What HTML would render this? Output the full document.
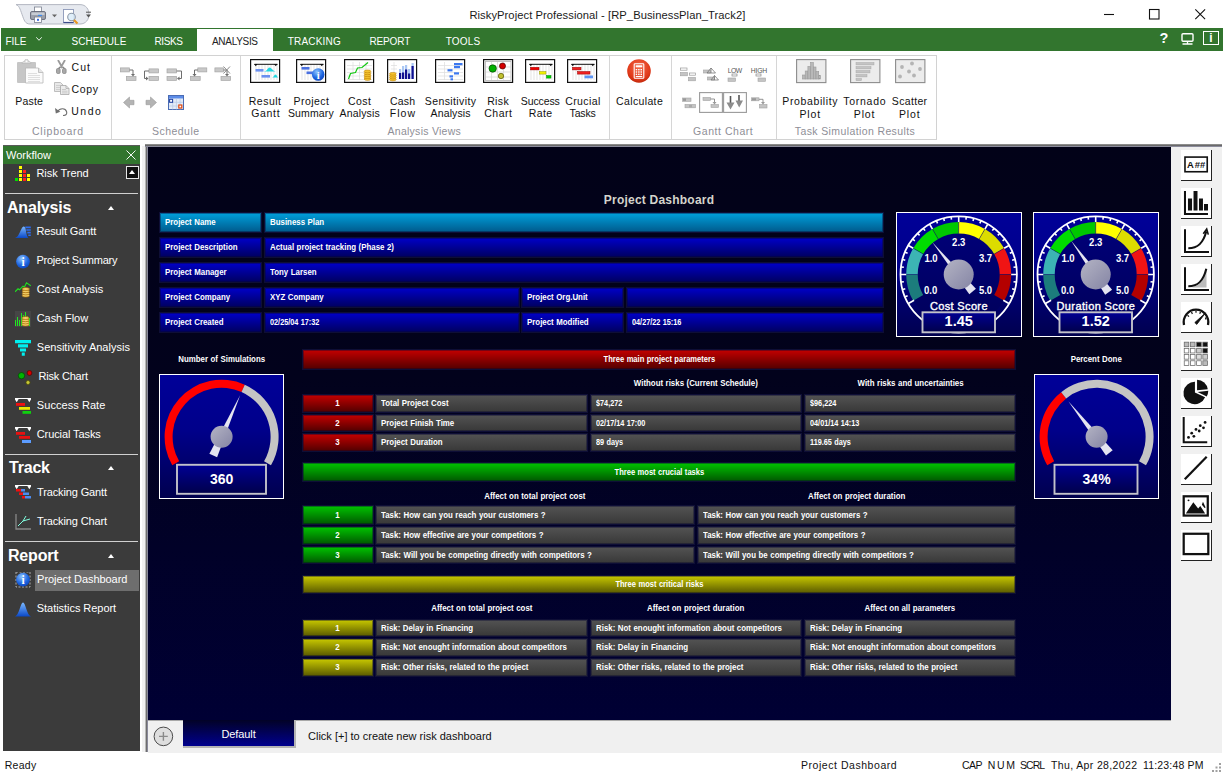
<!DOCTYPE html>
<html><head><meta charset="utf-8"><title>RiskyProject Professional</title>
<style>
*{box-sizing:border-box;margin:0;padding:0}
html,body{width:1224px;height:774px;overflow:hidden;background:#fff;font-family:"Liberation Sans",sans-serif;}
.a{position:absolute}
#app{position:relative;width:1224px;height:774px;overflow:hidden;background:#fff}
/* title */
#title{left:0;top:0;width:1224px;height:28px;background:#fff}
#title .t{left:0;width:1214px;top:7px;text-align:center;font-size:12px;color:#1a1a1a;letter-spacing:-0.1px}
/* tab bar */
#tabs{left:0;top:28px;width:1224px;height:23px;background:#32752e;border-left:1px solid #fff;border-right:1px solid #fff}
#tabs .tb{top:0;height:23px;line-height:25px;font-size:11px;color:#fff;white-space:nowrap}
#tabs .act{background:#fff;color:#222;top:1px;height:22px;line-height:23px;text-align:center}
/* ribbon */
#ribbon{left:4px;top:55px;width:933px;height:85px;border:1px solid #d2d2d2;background:#fff}
.sep{top:0;width:1px;height:83px;background:#d6d6d6}
.gl{font-size:11px;color:#8a8a8a;text-align:center;top:69px;white-space:nowrap;letter-spacing:.2px}
.rl{line-height:12px;white-space:nowrap}
.ico{width:30px;height:24px;border:1px solid #111;background:#fff;overflow:hidden}
.ico.g{border-color:#8c8c8c;background:#eee}
/* sidebar */
#side{left:3px;top:146px;width:137px;height:605px;background:#3b3b3b}
#side .hd{left:0;top:0;width:137px;height:18px;background:#32752e;color:#fff;font-size:11px;line-height:18px;padding-left:3px}
.si{left:37px;font-size:11px;color:#fff;white-space:nowrap;height:14px;line-height:14px}
.sh{left:5px;font-size:16px;font-weight:bold;color:#fff;line-height:18px;letter-spacing:-.2px}
.sl{left:4px;width:132px;height:1px;background:#d0d0d0}
.tri{left:106px;width:0;height:0;border-left:3.7px solid transparent;border-right:3.7px solid transparent;border-bottom:4px solid #fff}
/* dashboard */
#dash{left:148px;top:146px;width:1023px;height:574px;background:linear-gradient(#020218 0%,#02021c 40%,#000034 100%)}
#lframe{left:145px;top:144px;width:3px;height:608px;background:linear-gradient(to right,#b8b8b8 0 1px,#6e6e6e 1px 2px,#8a8a9c 2px 3px)}
#topline{left:145px;top:144px;width:1077px;height:3px;background:linear-gradient(#8c8c8c 0 1px,#6a6a6a 1px 2px,#8c8c9c 2px 3px)}
.dt{font-size:9px;font-weight:bold;color:#fff;white-space:nowrap;line-height:10px}
.dt span,.c span{display:inline-block;transform:scaleX(.875);word-spacing:.4px;transform-origin:0 50%}
.dt span,.c.ctr span{transform-origin:50% 50%}
.c{font-size:9px;font-weight:bold;color:#fff;white-space:nowrap;border:1px solid #0e0e36;padding-left:5px;box-shadow:inset 0 0 0 1px rgba(8,8,48,.4)}
.c.ctr{text-align:center;padding-left:0}
.bl{background:linear-gradient(#0000c8,#000060)}
.cy{background:linear-gradient(#00a0dc,#005a8c)}
.gy{background:linear-gradient(#535353,#383838)}
.rd{background:linear-gradient(#c40000,#520000)}
.gn{background:linear-gradient(#00c400,#005800)}
.yl{background:linear-gradient(#c8c800,#5a5a00)}
.gbox{border:1px solid #fff;background:linear-gradient(#000096,#00008c 50%,#000058)}
/* right bar */
#rbar{left:1171px;top:144px;width:51px;height:609px;background:#f0f0f0}
.rb{box-sizing:border-box;background:#fff;border-right:1px solid #222;border-bottom:1px solid #222}
/* bottom */
#btab{left:148px;top:720px;width:1074px;height:33px;background:#f0f0f0}
#status{left:0;top:753px;width:1224px;height:21px;background:#fff;font-size:11px;color:#111}
</style></head><body>
<div id="app">

<!-- TITLE -->
<div id="title" class="a">
<svg class="a" style="left:14px;top:4px" width="80" height="23" viewBox="0 0 80 23"><path d="M2 .6h64c6 0 9 4.800 9 9.700s-3 9.700-9 9.700H16c-5 0-6-4-8-9.700S5 1.600 2 .6z" fill="#e6e9ef" stroke="#b4b8c2" stroke-width="1"/>
<g transform="translate(16 3)"><rect x="4.500" y="0" width="7" height="5" fill="#fff" stroke="#7a8090" stroke-width=".8"/><rect x=".5" y="4.500" width="15" height="8" rx="1.500" fill="#9ca0ac" stroke="#5c6070" stroke-width=".8"/><rect x="1.500" y="5.500" width="13" height="2.500" fill="#c8ccd4"/><rect x="8" y="7.800" width="4" height="1.200" fill="#3c8cf0"/><rect x="4.500" y="10" width="7" height="5.500" fill="#fff" stroke="#7a8090" stroke-width=".8"/><rect x="7" y="11.800" width="2" height="2" fill="#3c6ce0"/></g>
<path d="M38 10.500h5l-2.500 2.800z" fill="#666"/>
<g transform="translate(49 5)"><rect x=".5" y=".5" width="10" height="13" fill="#fff" stroke="#8c98b8" stroke-width=".9"/><path d="M.5 13.500h10" stroke="#3c4c8c" stroke-width="1.200"/><circle cx="8.500" cy="8" r="3.800" fill="#dcecf8" fill-opacity=".9" stroke="#8c98a8" stroke-width="1.100"/><path d="M11 11l3.500 3.500" stroke="#e89820" stroke-width="2.200"/></g>
<path d="M72 8.200h5" stroke="#555" stroke-width="1"/><path d="M72 10.500h5l-2.500 3z" fill="#555"/></svg>
<svg class="a" style="left:1100px;top:6px" width="110" height="16" viewBox="0 0 110 16"><path d="M4 8.500h10" stroke="#111" stroke-width="1.100"/><rect x="49.500" y="3.500" width="9.500" height="9.500" fill="none" stroke="#111" stroke-width="1.100"/><path d="M95.300 3.300l9.800 9.800M105.100 3.300l-9.800 9.800" stroke="#111" stroke-width="1.100"/></svg>
<div class="a" style="left:469.39px;top:7.52px;font-size:11.2px;line-height:14px;letter-spacing:0.066px;color:#1a1a1a;white-space:nowrap">RiskyProject Professional - [RP_BusinessPlan_Track2]</div>
</div>

<!-- TABS -->
<div id="tabs" class="a">
<div class="a" style="left:196px;top:1px;width:76px;height:22px;background:#fff"></div>
<div class="a" style="left:4.59px;top:7.94px;font-size:10px;line-height:12px;letter-spacing:-0.092px;color:#fff;white-space:nowrap">FILE</div>
<div class="a" style="left:70.56px;top:7.94px;font-size:10px;line-height:12px;letter-spacing:0.054px;color:#fff;white-space:nowrap">SCHEDULE</div>
<div class="a" style="left:153.49px;top:7.94px;font-size:10px;line-height:12px;letter-spacing:-0.363px;color:#fff;white-space:nowrap">RISKS</div>
<div class="a" style="left:211.00px;top:7.94px;font-size:10px;line-height:12px;letter-spacing:-0.307px;color:#222;white-space:nowrap">ANALYSIS</div>
<div class="a" style="left:286.81px;top:7.94px;font-size:10px;line-height:12px;letter-spacing:0.179px;color:#fff;white-space:nowrap">TRACKING</div>
<div class="a" style="left:368.49px;top:7.94px;font-size:10px;line-height:12px;letter-spacing:-0.148px;color:#fff;white-space:nowrap">REPORT</div>
<div class="a" style="left:444.71px;top:7.94px;font-size:10px;line-height:12px;letter-spacing:0.169px;color:#fff;white-space:nowrap">TOOLS</div>
<svg class="a" style="left:34.5px;top:9px" width="6" height="4" viewBox="0 0 6 4"><path d="M.3.3l2.700 3 2.700-3" fill="none" stroke="#e8f0e8" stroke-width="1"/></svg>
<div class="a" style="left:1158.5px;top:3px;font-size:14.5px;font-weight:bold;color:#fff;line-height:15px">?</div>
<svg class="a" style="left:1180px;top:5px" width="13" height="12" viewBox="0 0 13 12"><rect x="1" y=".8" width="11" height="7.400" rx="1" fill="none" stroke="#fff" stroke-width="1.400"/><path d="M6.500 8.200v2.500M1.500 11h10" stroke="#fff" stroke-width="1.300"/></svg>
<div class="a" style="left:1202px;top:3px;width:16px;height:14px;border:1px solid #fff;color:#fff;font-size:12px;font-weight:bold;line-height:12px;text-align:center">i</div>
</div>

<!-- RIBBON -->
<div id="ribbon" class="a">
  <div class="a sep" style="left:106px"></div>
  <div class="a sep" style="left:235px"></div>
  <div class="a sep" style="left:604px"></div>
  <div class="a sep" style="left:666px"></div>
  <div class="a sep" style="left:771px"></div>
<svg class="a" style="left:12px;top:3px" width="27" height="25" viewBox="0 0 27 25"><rect x="0" y="3" width="19" height="21" rx="1" fill="#c6c6c6"/><path d="M5 4.500c0-1.500 1-2 2.500-2 0-1.500 1-2.300 2-2.300s2 .8 2 2.300c1.500 0 2.500.5 2.500 2z" fill="#dcdcdc" stroke="#b4b4b4" stroke-width=".6"/><circle cx="9.500" cy="2.300" r=".9" fill="#fff"/>
<path d="M8.500 9h13l4.500 4.500v10.500h-17.500z" fill="#fbfbfb" stroke="#b8b8b8" stroke-width=".8"/><path d="M21.500 9v4.500h4.500" fill="#e4e4e4" stroke="#b8b8b8" stroke-width=".8"/>
<path d="M11 14.500h9M11 16.500h12M11 18.500h12M11 20.500h12M11 22.500h12" stroke="#d8d8d8" stroke-width=".8"/></svg>
<div class="a rl" style="left:10.15px;top:38.86px;font-size:10.5px;letter-spacing:0.243px;color:#111">Paste</div>
<svg class="a" style="left:51px;top:4px" width="11" height="14" viewBox="0 0 11 14"><path d="M2 0l4.500 8M9 0l-4.500 8" stroke="#9a9a9a" stroke-width="1.800"/><path d="M4 7l-1.500 2M7 7l1.500 2" stroke="#888" stroke-width="1.500"/><rect x=".5" y="8.500" width="3.600" height="5" rx="1.200" fill="#a8a8a8" stroke="#8a8a8a" stroke-width=".8"/><rect x="6.500" y="8.500" width="3.600" height="5" rx="1.200" fill="#a8a8a8" stroke="#8a8a8a" stroke-width=".8"/></svg>
<div class="a rl" style="left:66.47px;top:5.11px;font-size:10.5px;letter-spacing:1.092px;color:#111">Cut</div>
<svg class="a" style="left:49px;top:26px" width="16" height="13" viewBox="0 0 16 13"><path d="M.5.5h6l2.500 2.500v6.500h-8.500z" fill="#e8e8e8" stroke="#b0b0b0" stroke-width=".8"/><path d="M2 3.500h4M2 5.500h5M2 7.500h5" stroke="#c4c4c4" stroke-width=".7"/>
<path d="M6.500 3.500h5.500l3 3v6h-8.500z" fill="#ececec" stroke="#a8a8a8" stroke-width=".8"/><path d="M12 3.500v3h3" fill="none" stroke="#a8a8a8" stroke-width=".7"/><path d="M8 7.500h4M8 9.200h5.500M8 10.900h5.500" stroke="#bbb" stroke-width=".7"/></svg>
<div class="a rl" style="left:66.47px;top:26.96px;font-size:10.5px;letter-spacing:0.660px;color:#111">Copy</div>
<svg class="a" style="left:50px;top:50px" width="13" height="10" viewBox="0 0 13 10"><path d="M2.500 5.500c2.500-4 8-3.500 9 0s-1.500 4-3.500 4" fill="none" stroke="#707070" stroke-width="1.100"/><path d="M0 2l.8 5.500 4.500-1.800z" fill="#707070"/></svg>
<div class="a rl" style="left:66.21px;top:48.61px;font-size:10.5px;letter-spacing:1.549px;color:#111">Undo</div>
<svg class="a" style="left:115px;top:11px" width="17" height="15" viewBox="0 0 17 15"><rect x=".4" y=".9" width="9" height="4" fill="#c8c8c8" stroke="#a6a6a6" stroke-width=".7"/><rect x="6.400" y="9.400" width="9.600" height="4" fill="#c8c8c8" stroke="#a6a6a6" stroke-width=".7"/><path d="M9.500 3h3.500v5" fill="none" stroke="#6e6e6e" stroke-width="1"/><path d="M11 7l2 2.500 2-2.500z" fill="#6e6e6e"/></svg>
<svg class="a" style="left:138px;top:11px" width="17" height="15" viewBox="0 0 17 15"><rect x="6" y="1.900" width="9.600" height="4" fill="#c8c8c8" stroke="#a6a6a6" stroke-width=".7"/><rect x="6" y="9.400" width="9.600" height="4" fill="#c8c8c8" stroke="#a6a6a6" stroke-width=".7"/><path d="M6 4h-4.500v7.500h2" fill="none" stroke="#6e6e6e" stroke-width="1"/><path d="M3 9.500l2.500 2-2.500 2z" fill="#6e6e6e"/></svg>
<svg class="a" style="left:161px;top:11px" width="17" height="15" viewBox="0 0 17 15"><rect x="1" y="1.900" width="9.600" height="4" fill="#c8c8c8" stroke="#a6a6a6" stroke-width=".7"/><rect x="1" y="9.400" width="9.600" height="4" fill="#c8c8c8" stroke="#a6a6a6" stroke-width=".7"/><path d="M10.600 4h4.900v7.500h-2.500" fill="none" stroke="#6e6e6e" stroke-width="1"/><path d="M13.500 9.500l-2.500 2 2.500 2z" fill="#6e6e6e"/></svg>
<svg class="a" style="left:185px;top:11px" width="18" height="15" viewBox="0 0 18 15"><rect x="7.800" y=".9" width="9" height="4" fill="#c8c8c8" stroke="#a6a6a6" stroke-width=".7"/><rect x=".6" y="9.400" width="9.600" height="4" fill="#c8c8c8" stroke="#a6a6a6" stroke-width=".7"/><path d="M7.800 3h-3.300v5" fill="none" stroke="#6e6e6e" stroke-width="1"/><path d="M2.500 7l2 2.500 2-2.500z" fill="#6e6e6e"/></svg>
<svg class="a" style="left:209px;top:10px" width="18" height="16" viewBox="0 0 18 16"><rect x=".9" y="1.900" width="8.500" height="4" fill="#c8c8c8" stroke="#a6a6a6" stroke-width=".7"/><rect x="7" y="10.400" width="9.600" height="4" fill="#c8c8c8" stroke="#a6a6a6" stroke-width=".7"/><path d="M9.500 4h3.500v5" fill="none" stroke="#6e6e6e" stroke-width="1"/><path d="M11 8l2 2.500 2-2.500z" fill="#6e6e6e"/><path d="M9.500.5l6.500 7M16 .5l-6.500 7" stroke="#8a8a8a" stroke-width="1"/></svg>
<svg class="a" style="left:118px;top:40px" width="12" height="13" viewBox="0 0 12 13"><path d="M.5 6.500l6-5.500v3.300h4.500v4.400h-4.500v3.300z" fill="#b4b4b4" stroke="#9c9c9c" stroke-width=".6"/></svg>
<svg class="a" style="left:140px;top:40px" width="12" height="13" viewBox="0 0 12 13"><path d="M11.500 6.500l-6-5.500v3.300h-4.500v4.400h4.500v3.300z" fill="#b4b4b4" stroke="#9c9c9c" stroke-width=".6"/></svg>
<svg class="a" style="left:163px;top:39px" width="16" height="15" viewBox="0 0 16 15"><rect x=".5" y=".5" width="15" height="14" fill="#e4ecf8" stroke="#4a6cb4" stroke-width="1"/><rect x="1" y="1" width="14" height="2.500" fill="#5c8ce8"/><path d="M1 7.300h14M1 11h14M4.700 3.500v11M8.400 3.500v11M12.100 3.500v11" stroke="#b8c8e4" stroke-width=".7"/><rect x="1.600" y="4.300" width="3" height="3" fill="#fff" stroke="#1c3ca0" stroke-width="1"/><rect x="10.800" y="10" width="3" height="3" fill="#fff" stroke="#e04810" stroke-width="1.200"/></svg>
<svg class="a" style="left:245px;top:3px" width="31" height="24" viewBox="0 0 31 24"><rect x=".6" y=".6" width="29" height="22.800" fill="#fff" stroke="#111" stroke-width="1.200"/><path d="M6 5v16M9 5v16M12 5v16M15 5v16M18 5v16M21 5v16M24 5v16M27 5v16" stroke="#d8d8d8" stroke-width=".7"/><path d="M4.500 5.300h23" stroke="#111" stroke-width="1"/><path d="M4 5h3.500l-1.700 2.300zM24 5h3.500l-1.700 2.300z" fill="#111"/><rect x="5.500" y="10" width="8" height="2.600" fill="#6a90f0"/><rect x="11.500" y="16" width="8.500" height="2.600" fill="#6a90f0"/><path d="M13.500 12.500c4 0 4-4 6-4s3 3.500 6.500 4z" fill="#20d8e0"/><path d="M22 18.500c2 0 2-3 3.500-3s1.500 3 3 3z" fill="#20d8e0"/></svg>
<svg class="a" style="left:291px;top:3px" width="31" height="24" viewBox="0 0 31 24"><rect x=".6" y=".6" width="29" height="22.800" fill="#fff" stroke="#111" stroke-width="1.200"/><path d="M6 5v16M9 5v16M12 5v16M15 5v16M18 5v16M21 5v16M24 5v16M27 5v16" stroke="#d8d8d8" stroke-width=".7"/><path d="M4.500 5.300h23" stroke="#111" stroke-width="1"/><path d="M4 5h3.500l-1.700 2.300zM24 5h3.500l-1.700 2.300z" fill="#111"/><rect x="5.500" y="8" width="8" height="2.600" fill="#4a70e0"/><rect x="10.500" y="12.500" width="8" height="2.600" fill="#4a70e0"/><defs><radialGradient id="ri" cx=".4" cy=".3" r=".8"><stop offset="0" stop-color="#8cc4ff"/><stop offset=".6" stop-color="#1c64e0"/><stop offset="1" stop-color="#0a3cb0"/></radialGradient></defs><circle cx="22.200" cy="15.500" r="6.300" fill="url(#ri)"/><text x="22.200" y="19.500" font-family="Liberation Serif, serif" font-weight="bold" font-size="10.500" text-anchor="middle" fill="#fff">i</text></svg>
<svg class="a" style="left:339px;top:3px" width="31" height="24" viewBox="0 0 31 24"><rect x=".6" y=".6" width="29" height="22.800" fill="#fff" stroke="#111" stroke-width="1.200"/><path d="M3 6.500h25M3 10h25M3 13.500h25M3 17h25M3 20.500h25M9 3v18M15.500 3v18M22 3v18" stroke="#dcdcdc" stroke-width=".7"/><path d="M4.500 20l2-5.500 5-1 2-4.500 4.500-.5 6-5" fill="none" stroke="#10c810" stroke-width="1.200"/><g fill="#f4c430" stroke="#b87800" stroke-width=".5"><ellipse cx="23.5" cy="20.0" rx="3.400" ry="1.400"/><ellipse cx="23.5" cy="18.1" rx="3.400" ry="1.400"/><ellipse cx="23.5" cy="16.2" rx="3.400" ry="1.400"/><ellipse cx="23.5" cy="14.3" rx="3.400" ry="1.400"/><ellipse cx="23.5" cy="12.4" rx="3.400" ry="1.400"/></g></svg>
<svg class="a" style="left:382px;top:3px" width="31" height="24" viewBox="0 0 31 24"><rect x=".6" y=".6" width="29" height="22.800" fill="#fff" stroke="#111" stroke-width="1.200"/><path d="M4 6.500h6M4 10h6M4 13.500h6M7 3v15" stroke="#dcdcdc" stroke-width=".7"/><rect x="12" y="10" width="2.200" height="10" fill="#aac8f4"/><rect x="12" y="14" width="2.200" height="6" fill="#101090"/><rect x="15" y="7" width="2.200" height="13" fill="#aac8f4"/><rect x="15" y="13.5" width="2.200" height="6.5" fill="#101090"/><rect x="18" y="6" width="2.200" height="14" fill="#aac8f4"/><rect x="18" y="10.5" width="2.200" height="9.5" fill="#101090"/><rect x="21" y="10" width="2.200" height="10" fill="#aac8f4"/><rect x="21" y="14.5" width="2.200" height="5.5" fill="#101090"/><rect x="24.5" y="4" width="2.200" height="16" fill="#aac8f4"/><rect x="24.5" y="7" width="2.200" height="13" fill="#101090"/><g fill="#f4c430" stroke="#b87800" stroke-width=".5"><ellipse cx="5.8" cy="20.5" rx="3.400" ry="1.400"/><ellipse cx="5.8" cy="18.6" rx="3.400" ry="1.400"/><ellipse cx="5.8" cy="16.7" rx="3.400" ry="1.400"/><ellipse cx="5.8" cy="14.8" rx="3.400" ry="1.400"/></g></svg>
<svg class="a" style="left:430px;top:3px" width="31" height="24" viewBox="0 0 31 24"><rect x=".6" y=".6" width="29" height="22.800" fill="#fff" stroke="#111" stroke-width="1.200"/><path d="M3 6.500h25M3 10h25M3 13.500h25M3 17h25M3 20.500h25M9.500 3v18" stroke="#dcdcdc" stroke-width=".7"/><rect x="19" y="4" width="8.500" height="2.200" fill="#3c78f0"/><rect x="19" y="7" width="6" height="2.200" fill="#3c78f0"/><rect x="12.500" y="10.200" width="5" height="2.200" fill="#3c78f0"/><rect x="19" y="13.300" width="5" height="2.200" fill="#3c78f0"/><rect x="14.500" y="16.300" width="3.500" height="2.200" fill="#3c78f0"/><rect x="15.500" y="19.300" width="2.500" height="2" fill="#3c78f0"/></svg>
<svg class="a" style="left:478px;top:3px" width="31" height="24" viewBox="0 0 31 24"><rect x=".6" y=".6" width="29" height="22.800" fill="#fff" stroke="#111" stroke-width="1.200"/><rect x="2.500" y="2.500" width="25.500" height="19" fill="none" stroke="#b4b4b4" stroke-width=".8"/><path d="M3 8h25M3 13h25M3 18h25M8.500 3v18M14.500 3v18M20.500 3v18" stroke="#d4d4d4" stroke-width=".7"/><circle cx="9.700" cy="9.500" r="3.700" fill="#00b000" stroke="#004800" stroke-width=".7"/><circle cx="19.500" cy="7" r="3" fill="#d40000" stroke="#500000" stroke-width=".7"/><circle cx="18" cy="17" r="2.700" fill="#c0c030" stroke="#585800" stroke-width=".7"/></svg>
<svg class="a" style="left:520px;top:3px" width="31" height="24" viewBox="0 0 31 24"><rect x=".6" y=".6" width="29" height="22.800" fill="#fff" stroke="#111" stroke-width="1.200"/><path d="M6 5v16M9 5v16M12 5v16M15 5v16M18 5v16M21 5v16M24 5v16M27 5v16" stroke="#d8d8d8" stroke-width=".7"/><path d="M4.500 5.300h23" stroke="#111" stroke-width="1"/><path d="M4 5h3.500l-1.700 2.300zM24 5h3.500l-1.700 2.300z" fill="#111"/><rect x="5.500" y="8.300" width="8.500" height="2.600" fill="#f00000" stroke="#900" stroke-width=".5"/><rect x="14.500" y="12.500" width="6.500" height="2.600" fill="#f0f000" stroke="#990" stroke-width=".5"/><rect x="21.500" y="16.500" width="4.500" height="2.600" fill="#00d000" stroke="#080" stroke-width=".5"/></svg>
<svg class="a" style="left:562px;top:3px" width="31" height="24" viewBox="0 0 31 24"><rect x=".6" y=".6" width="29" height="22.800" fill="#fff" stroke="#111" stroke-width="1.200"/><path d="M6 5v16M9 5v16M12 5v16M15 5v16M18 5v16M21 5v16M24 5v16M27 5v16" stroke="#d8d8d8" stroke-width=".7"/><path d="M4.500 5.300h23" stroke="#111" stroke-width="1"/><path d="M4 5h3.500l-1.700 2.300zM24 5h3.500l-1.700 2.300z" fill="#111"/><rect x="5.500" y="8.300" width="8.500" height="2.600" fill="#f02020" stroke="#900" stroke-width=".5"/><rect x="10.500" y="12.500" width="12.500" height="2.600" fill="#f02020" stroke="#900" stroke-width=".5"/><rect x="17.500" y="16.500" width="8.500" height="2.800" fill="#5c94f4"/></svg>
<div class="a rl" style="left:243.75px;top:38.96px;font-size:10.5px;letter-spacing:0.485px;color:#111">Result</div>
<div class="a rl" style="left:246.22px;top:51.36px;font-size:10.5px;letter-spacing:0.679px;color:#111">Gantt</div>
<div class="a rl" style="left:288.55px;top:38.96px;font-size:10.5px;letter-spacing:0.462px;color:#111">Project</div>
<div class="a rl" style="left:282.94px;top:51.36px;font-size:10.5px;letter-spacing:0.143px;color:#111">Summary</div>
<div class="a rl" style="left:342.88px;top:38.96px;font-size:10.5px;letter-spacing:0.478px;color:#111">Cost</div>
<div class="a rl" style="left:334.60px;top:51.36px;font-size:10.5px;letter-spacing:0.145px;color:#111">Analysis</div>
<div class="a rl" style="left:385.08px;top:38.96px;font-size:10.5px;letter-spacing:0.146px;color:#111">Cash</div>
<div class="a rl" style="left:384.75px;top:51.36px;font-size:10.5px;letter-spacing:1.024px;color:#111">Flow</div>
<div class="a rl" style="left:419.79px;top:38.96px;font-size:10.5px;letter-spacing:0.396px;color:#111">Sensitivity</div>
<div class="a rl" style="left:425.60px;top:51.36px;font-size:10.5px;letter-spacing:0.124px;color:#111">Analysis</div>
<div class="a rl" style="left:482.15px;top:38.96px;font-size:10.5px;letter-spacing:0.398px;color:#111">Risk</div>
<div class="a rl" style="left:479.23px;top:51.36px;font-size:10.5px;letter-spacing:0.504px;color:#111">Chart</div>
<div class="a rl" style="left:515.79px;top:38.96px;font-size:10.5px;letter-spacing:-0.111px;color:#111">Success</div>
<div class="a rl" style="left:523.65px;top:51.36px;font-size:10.5px;letter-spacing:0.410px;color:#111">Rate</div>
<div class="a rl" style="left:560.23px;top:38.96px;font-size:10.5px;letter-spacing:0.386px;color:#111">Crucial</div>
<div class="a rl" style="left:564.55px;top:51.36px;font-size:10.5px;letter-spacing:-0.166px;color:#111">Tasks</div>
<div class="a rl" style="left:611.08px;top:38.96px;font-size:10.5px;letter-spacing:0.358px;color:#111">Calculate</div>
<div class="a rl" style="left:777.35px;top:38.96px;font-size:10.5px;letter-spacing:0.613px;color:#111">Probability</div>
<div class="a rl" style="left:794.55px;top:51.66px;font-size:10.5px;letter-spacing:0.802px;color:#111">Plot</div>
<div class="a rl" style="left:838.20px;top:38.96px;font-size:10.5px;letter-spacing:0.743px;color:#111">Tornado</div>
<div class="a rl" style="left:848.85px;top:51.66px;font-size:10.5px;letter-spacing:0.802px;color:#111">Plot</div>
<div class="a rl" style="left:886.84px;top:38.96px;font-size:10.5px;letter-spacing:0.336px;color:#111">Scatter</div>
<div class="a rl" style="left:894.05px;top:51.66px;font-size:10.5px;letter-spacing:0.802px;color:#111">Plot</div>
<svg class="a" style="left:622px;top:3px" width="24" height="24" viewBox="0 0 24 24"><defs><radialGradient id="rc" cx=".5" cy=".35" r=".7"><stop offset="0" stop-color="#f46a4a"/><stop offset=".7" stop-color="#e03818"/><stop offset="1" stop-color="#b82408"/></radialGradient></defs><circle cx="12" cy="12" r="11.800" fill="url(#rc)"/><rect x="7.200" y="4.800" width="9.600" height="14.400" rx=".8" fill="none" stroke="#fff" stroke-width="1.100"/><rect x="8.700" y="6.300" width="6.600" height="2" fill="#fff"/><g fill="#fff"><rect x="8.7" y="10.0" width="1.500" height="1.400"/><rect x="11.1" y="10.0" width="1.500" height="1.400"/><rect x="13.5" y="10.0" width="1.500" height="1.400"/><rect x="8.7" y="12.3" width="1.500" height="1.400"/><rect x="11.1" y="12.3" width="1.500" height="1.400"/><rect x="13.5" y="12.3" width="1.500" height="1.400"/><rect x="8.7" y="14.6" width="1.500" height="1.400"/><rect x="11.1" y="14.6" width="1.500" height="1.400"/><rect x="13.5" y="14.6" width="1.500" height="1.400"/><rect x="8.700" y="16.900" width="6.600" height="1.200"/></g></svg>
<svg class="a" style="left:675px;top:11px" width="17" height="15" viewBox="0 0 17 15"><rect x=".5" y="1" width="6.500" height="2.200" fill="#fff" stroke="#999" stroke-width=".7"/><rect x=".5" y="5.500" width="7" height="3.300" fill="#c4c4c4" stroke="#a2a2a2" stroke-width=".6"/><rect x="9.500" y="6" width="6" height="2.200" fill="#fff" stroke="#999" stroke-width=".7"/><rect x="8.500" y="10.500" width="7" height="3.300" fill="#c4c4c4" stroke="#a2a2a2" stroke-width=".6"/></svg>
<svg class="a" style="left:698px;top:11px" width="17" height="15" viewBox="0 0 17 15"><rect x=".5" y="3" width="7" height="3" fill="#c4c4c4" stroke="#a2a2a2" stroke-width=".6"/><path d="M4 6l4-5 4.500 5zM8 1v5" fill="none" stroke="#777" stroke-width=".8"/><rect x="4.500" y="10" width="7" height="3" fill="#c4c4c4" stroke="#a2a2a2" stroke-width=".6"/><path d="M8 13l3.500-4.500 4 4.500zM11.500 8.500v4.500" fill="none" stroke="#777" stroke-width=".8"/></svg>
<svg class="a" style="left:722px;top:11px" width="17" height="15" viewBox="0 0 17 15"><text x="8" y="5.500" font-family="Liberation Sans, sans-serif" font-size="6.800" text-anchor="middle" fill="#555" textLength="14.500">LOW</text><rect x="5" y="7" width="5" height="2" fill="#fff" stroke="#888" stroke-width=".7"/><rect x="1" y="11" width="7.500" height="3.300" fill="#c4c4c4" stroke="#a2a2a2" stroke-width=".6"/></svg>
<svg class="a" style="left:745px;top:11px" width="18" height="15" viewBox="0 0 18 15"><text x="9" y="5.500" font-family="Liberation Sans, sans-serif" font-size="6.800" text-anchor="middle" fill="#555" textLength="16.500">HIGH</text><rect x="6" y="7" width="5" height="2" fill="#fff" stroke="#888" stroke-width=".7"/><rect x="8" y="11" width="7.500" height="3.300" fill="#c4c4c4" stroke="#a2a2a2" stroke-width=".6"/></svg>
<svg class="a" style="left:677px;top:41px" width="15" height="12" viewBox="0 0 15 12"><rect x=".5" y="1" width="8.500" height="3.300" fill="#c4c4c4" stroke="#a2a2a2" stroke-width=".6"/><rect x="1" y="1.400" width="3" height="2.500" fill="#999"/><rect x="3" y="7.500" width="10.500" height="3.300" fill="#c4c4c4" stroke="#a2a2a2" stroke-width=".6"/><rect x="7" y="7.900" width="3" height="2.500" fill="#aaa"/></svg>
<svg class="a" style="left:694px;top:36px" width="24" height="21" viewBox="0 0 24 21"><rect x=".6" y=".6" width="22.800" height="19.800" fill="#fff" stroke="#9a9a9a" stroke-width="1.100"/><rect x="4" y="5.500" width="7.500" height="3" fill="#c4c4c4" stroke="#a2a2a2" stroke-width=".6"/><rect x="12" y="12.500" width="7.500" height="3" fill="#c4c4c4" stroke="#a2a2a2" stroke-width=".6"/><path d="M11.500 7h4v4" fill="none" stroke="#888" stroke-width=".9"/><path d="M13.500 10l2 2.500 2-2.500z" fill="#999"/></svg>
<svg class="a" style="left:718px;top:36px" width="24" height="21" viewBox="0 0 24 21"><rect x=".6" y=".6" width="22.800" height="19.800" fill="#fff" stroke="#9a9a9a" stroke-width="1.100"/><path d="M7.500 4v8M16 3v7" stroke="#555" stroke-width="1.600"/><path d="M3.500 10.500h8l-4 7zM12.500 8.500h7.500l-3.800 7z" fill="#8c8c8c"/></svg>
<svg class="a" style="left:746px;top:41px" width="17" height="12" viewBox="0 0 17 12"><rect x=".5" y=".8" width="7.500" height="3" fill="#c4c4c4" stroke="#a2a2a2" stroke-width=".6"/><rect x="1" y="1.200" width="4" height="2.200" fill="#999"/><rect x="8.500" y="7.500" width="7.500" height="3.500" fill="#c4c4c4" stroke="#a2a2a2" stroke-width=".6"/><path d="M8 2.300h4v4" fill="none" stroke="#888" stroke-width=".9"/><path d="M10 5l2 2.500 2-2.500z" fill="#999"/></svg>
<svg class="a" style="left:791px;top:3px" width="31" height="25" viewBox="0 0 31 25"><rect x=".6" y=".6" width="29.300" height="23" fill="#ececec" stroke="#8c8c8c" stroke-width="1.100"/><g fill="#b8b8b8" stroke="#9a9a9a" stroke-width=".6"><rect x="6.500" y="16" width="2.700" height="4"/><rect x="9.200" y="12" width="2.700" height="8"/><rect x="11.900" y="7.500" width="2.700" height="12.500"/><rect x="14.600" y="3.500" width="2.700" height="16.500"/><rect x="17.300" y="8" width="2.700" height="12"/><rect x="20" y="12.500" width="2.700" height="7.500"/><rect x="22.700" y="16.500" width="1.800" height="3.500"/></g></svg>
<svg class="a" style="left:845px;top:3px" width="31" height="25" viewBox="0 0 31 25"><rect x=".6" y=".6" width="29.300" height="23" fill="#ececec" stroke="#8c8c8c" stroke-width="1.100"/><g fill="#c4c4c4" stroke="#aaa" stroke-width=".5"><rect x="6" y="3.500" width="18" height="2.400"/><rect x="6" y="7.500" width="15" height="2.400"/><rect x="6" y="11.500" width="14" height="2.400"/><rect x="6" y="15.500" width="11" height="2.400"/><rect x="6" y="19.500" width="5.500" height="2.200"/></g></svg>
<svg class="a" style="left:890px;top:3px" width="31" height="25" viewBox="0 0 31 25"><rect x=".6" y=".6" width="29.300" height="23" fill="#ececec" stroke="#8c8c8c" stroke-width="1.100"/><g fill="#b4b4b4"><circle cx="7" cy="8" r="1.900"/><circle cx="17" cy="4.500" r="1.900"/><circle cx="14" cy="12.500" r="1.900"/><circle cx="25" cy="10" r="1.900"/><circle cx="5" cy="17.500" r="1.900"/><circle cx="19" cy="16.500" r="1.900"/></g></svg>
<div class="a rl" style="left:26.98px;top:68.96px;font-size:10.5px;letter-spacing:0.779px;color:#8e8e96">Clipboard</div>
<div class="a rl" style="left:146.94px;top:68.96px;font-size:10.5px;letter-spacing:0.478px;color:#8e8e96">Schedule</div>
<div class="a rl" style="left:382.50px;top:68.96px;font-size:10.5px;letter-spacing:0.269px;color:#8e8e96">Analysis Views</div>
<div class="a rl" style="left:688.08px;top:68.96px;font-size:10.5px;letter-spacing:0.540px;color:#8e8e96">Gantt Chart</div>
<div class="a rl" style="left:789.80px;top:68.96px;font-size:10.5px;letter-spacing:0.386px;color:#8e8e96">Task Simulation Results</div>

</div>

<!-- SIDEBAR -->
<div id="side" class="a">
  <div class="a hd">Workflow</div>
<svg class="a" style="left:123px;top:4px" width="10" height="10" viewBox="0 0 10 10"><path d="M.5.5l9 9M9.500.5l-9 9" stroke="#fff" stroke-width=".950"/></svg>
<div class="a" style="left:123px;top:20px;width:13px;height:13px;background:#111;border:1px solid #e8e8e8"></div><div class="a" style="left:126px;top:24px;width:0;height:0;border-left:3.5px solid transparent;border-right:3.5px solid transparent;border-bottom:4px solid #fff"></div>
<svg class="a" style="left:12px;top:20.0px" width="16" height="16" viewBox="0 0 16 16"><rect x="0" y="12" width="3" height="3" fill="#00e000"/><rect x="4" y="12" width="3" height="3" fill="#ffff00"/><rect x="8" y="12" width="3" height="3" fill="#ff2020"/><rect x="12" y="12" width="3" height="3" fill="#ffff00"/><rect x="4" y="8" width="3" height="3" fill="#ffff00"/><rect x="8" y="8" width="3" height="3" fill="#ff2020"/><rect x="12" y="8" width="3" height="3" fill="#ffff00"/><rect x="4" y="4" width="3" height="3" fill="#ffff00"/><rect x="8" y="4" width="3" height="3" fill="#ff2020"/><rect x="4" y="0" width="3" height="3" fill="#ffff00"/></svg>
<div class="a si" style="left:33.41px;top:20px;letter-spacing:-0.035px">Risk Trend</div>
<div class="a sl" style="left:2px;top:47px;width:133px"></div>
<div class="a sh" style="left:4px;top:53px">Analysis</div>
<div class="a tri" style="left:105px;top:60px"></div>
<svg class="a" style="left:12px;top:78.0px" width="16" height="16" viewBox="0 0 16 16"><defs><linearGradient id="sb" x1="0" y1="0" x2="0" y2="1"><stop offset="0" stop-color="#7ab8ff"/><stop offset="1" stop-color="#0a48c8"/></linearGradient></defs><path d="M0 14c4.500-.8 6-11.600 8.600-11.600s2.200 6 3.400 9 1.500 2.600 2 2.600z" fill="url(#sb)"/><path d="M10.300 2.600h5.500v1.600h-5.500zM11.300 5.200h4.500v1.600h-4.500zM12.300 7.800h3.500v1.600h-3.500zM13.300 10.400h2.500v1.600h-2.500z" fill="#2c6cf0"/></svg>
<div class="a si" style="left:33.41px;top:78px;letter-spacing:-0.120px">Result Gantt</div>
<svg class="a" style="left:12px;top:107.5px" width="16" height="16" viewBox="0 0 16 16"><defs><radialGradient id="si" cx=".4" cy=".3" r=".8"><stop offset="0" stop-color="#8cc4ff"/><stop offset=".6" stop-color="#1c64e0"/><stop offset="1" stop-color="#0a3cb0"/></radialGradient></defs><circle cx="8" cy="7.600" r="6.900" fill="url(#si)"/><text x="8" y="11.800" font-family="Liberation Serif, serif" font-weight="bold" font-size="11.500" text-anchor="middle" fill="#fff">i</text></svg>
<div class="a si" style="left:33.41px;top:107px;letter-spacing:-0.233px">Project Summary</div>
<svg class="a" style="left:12px;top:136.0px" width="16" height="16" viewBox="0 0 16 16"><path d="M0 9.800L3 6.800L4.500 7.800L8 4.200L9.500 5L11.500.8L15.800 3.800" fill="none" stroke="#20e020" stroke-width="1.100"/><g stroke="#a86800" stroke-width=".7" fill="#f0cc68"><ellipse cx="10.8" cy="13.6" rx="3.600" ry="1.500"/><ellipse cx="10.8" cy="11.4" rx="3.600" ry="1.500"/><ellipse cx="10.8" cy="9.2" rx="3.600" ry="1.500"/><ellipse cx="10.8" cy="7" rx="3.600" ry="1.500"/></g></svg>
<div class="a si" style="left:33.75px;top:136px;letter-spacing:0.033px">Cost Analysis</div>
<svg class="a" style="left:12px;top:165.0px" width="16" height="16" viewBox="0 0 16 16"><rect x="0" y="0" width="16" height="16" fill="#464646"/><path d="M.5 15V9M2.500 15V6M4.500 15V8.500M6.500 15V1.500M8.500 15V4M10.500 15V1M12.500 15V4.500M14.500 15V7" stroke="#20e820" stroke-width="1" shape-rendering="crispEdges"/><g stroke="#a86800" stroke-width=".7" fill="#f0cc68"><ellipse cx="10.5" cy="13.6" rx="3.600" ry="1.500"/><ellipse cx="10.5" cy="11.4" rx="3.600" ry="1.500"/><ellipse cx="10.5" cy="9.2" rx="3.600" ry="1.500"/><ellipse cx="10.5" cy="7" rx="3.600" ry="1.500"/></g></svg>
<div class="a si" style="left:33.75px;top:165px;letter-spacing:-0.078px">Cash Flow</div>
<svg class="a" style="left:12px;top:194.0px" width="16" height="16" viewBox="0 0 16 16"><path d="M0 0h16v3.200h-16zM3 4.200h10v3.200h-10zM5 8.400h6v3.200h-6zM6.800 12.600h3v3.200h-3z" fill="#00f0f0"/></svg>
<div class="a si" style="left:33.82px;top:194px;letter-spacing:0.009px">Sensitivity Analysis</div>
<svg class="a" style="left:14px;top:222.5px" width="16" height="16" viewBox="0 0 16 16"><circle cx="4.500" cy="6.700" r="3.200" fill="#00b400" stroke="#004000" stroke-width=".7"/><circle cx="12.500" cy="4" r="2.400" fill="#d80000" stroke="#500" stroke-width=".7"/><circle cx="11" cy="13.500" r="2" fill="#c8c838" stroke="#505000" stroke-width=".7"/></svg>
<div class="a si" style="left:35.41px;top:223px;letter-spacing:-0.188px">Risk Chart</div>
<svg class="a" style="left:12px;top:251.5px" width="16" height="16" viewBox="0 0 16 16"><path d="M0 .3h16M0 .3l1.700 2.800L3.400 .3zM12.600 .3l1.700 2.800L16 .3z" fill="#fff" stroke="#fff" stroke-width="1.200"/><rect x="1" y="5" width="9" height="2.800" fill="#f01010"/><rect x="4" y="9" width="11" height="2.800" fill="#e8e800"/><rect x="7.500" y="13" width="8.500" height="2.800" fill="#10d010"/></svg>
<div class="a si" style="left:33.82px;top:252px;letter-spacing:0.055px">Success Rate</div>
<svg class="a" style="left:12px;top:280.5px" width="16" height="16" viewBox="0 0 16 16"><path d="M0 .3h16M0 .3l1.700 2.800L3.400 .3zM12.600 .3l1.700 2.800L16 .3z" fill="#fff" stroke="#fff" stroke-width="1.200"/><rect x="1" y="5" width="9" height="2.800" fill="#e81010"/><rect x="4" y="9" width="11" height="2.800" fill="#e81010"/><rect x="7" y="13" width="9" height="3" fill="#5c9cff"/></svg>
<div class="a si" style="left:33.75px;top:281px;letter-spacing:-0.098px">Crucial Tasks</div>
<div class="a sl" style="left:2px;top:308px;width:133px"></div>
<div class="a sh" style="left:6px;top:313px">Track</div>
<div class="a tri" style="left:105px;top:320px"></div>
<svg class="a" style="left:12px;top:339.0px" width="16" height="16" viewBox="0 0 16 16"><path d="M0 .3h16M0 .3l1.700 2.800L3.400 .3zM12.600 .3l1.700 2.800L16 .3z" fill="#fff" stroke="#fff" stroke-width="1.200"/><rect x="1" y="4" width="5" height="2.500" fill="#f01010"/><rect x="6" y="4" width="4" height="2.500" fill="#4c8cf0"/><rect x="4" y="7.500" width="4" height="2.500" fill="#f01010"/><rect x="8" y="7.500" width="6" height="2.500" fill="#4c8cf0"/><rect x="7" y="11" width="3" height="2.500" fill="#f01010"/><rect x="10" y="11" width="6" height="2.500" fill="#4c8cf0"/></svg>
<div class="a si" style="left:34.09px;top:339px;letter-spacing:-0.138px">Tracking Gantt</div>
<svg class="a" style="left:12px;top:368.0px" width="16" height="16" viewBox="0 0 16 16"><path d="M1 0v15h15" fill="none" stroke="#888" stroke-width="1.300"/><path d="M3 12l5-5 3-5M8 7l7-2" fill="none" stroke="#80ffe0" stroke-width="1"/></svg>
<div class="a si" style="left:34.09px;top:368px;letter-spacing:-0.138px">Tracking Chart</div>
<div class="a sl" style="left:2px;top:395px;width:133px"></div>
<div class="a sh" style="left:5px;top:401px">Report</div>
<div class="a tri" style="left:105px;top:408px"></div>
<svg class="a" style="left:12px;top:425.5px" width="16" height="16" viewBox="0 0 16 16"><rect x="1" y="0" width="14" height="15" fill="none" stroke="#aaa" stroke-width="1" stroke-dasharray="2 1.500"/><defs><radialGradient id="si2" cx=".4" cy=".3" r=".8"><stop offset="0" stop-color="#8cc4ff"/><stop offset=".6" stop-color="#1c64e0"/><stop offset="1" stop-color="#0a3cb0"/></radialGradient></defs><circle cx="8" cy="7.600" r="6.900" fill="url(#si2)"/><text x="8" y="11.800" font-family="Liberation Serif, serif" font-weight="bold" font-size="11.500" text-anchor="middle" fill="#fff">i</text></svg>
<div class="a" style="left:32px;top:424px;width:104px;height:21px;background:#6e6e6e"></div>
<div class="a si" style="left:34.11px;top:426px;letter-spacing:-0.051px">Project Dashboard</div>
<svg class="a" style="left:12px;top:454.5px" width="16" height="16" viewBox="0 0 16 16"><path d="M0 15.500c4-1 5.500-14 8-14s4 13 8 14z" fill="url(#sb)"/></svg>
<div class="a si" style="left:33.82px;top:455px;letter-spacing:-0.046px">Statistics Report</div>

</div>

<!-- DASHBOARD -->
<div id="dash" class="a"></div>
<div id="dc" class="a" style="left:0;top:0;width:0;height:0">
<div class="a" style="left:559px;top:193px;width:200px;text-align:center;font-size:12px;font-weight:bold;color:#d4d4cc;line-height:14px;letter-spacing:.22px">Project Dashboard</div>
<div class="a c cy" style="left:159px;top:212px;width:103px;height:21px;line-height:19px"><span>Project Name</span></div>
<div class="a c cy" style="left:264px;top:212px;width:620px;height:21px;line-height:19px"><span>Business Plan</span></div>
<div class="a c bl" style="left:159px;top:237px;width:103px;height:21px;line-height:19px"><span>Project Description</span></div>
<div class="a c bl" style="left:264px;top:237px;width:620px;height:21px;line-height:19px"><span>Actual project tracking (Phase 2)</span></div>
<div class="a c bl" style="left:159px;top:262px;width:103px;height:21px;line-height:19px"><span>Project Manager</span></div>
<div class="a c bl" style="left:264px;top:262px;width:620px;height:21px;line-height:19px"><span>Tony Larsen</span></div>
<div class="a c bl" style="left:159px;top:287px;width:103px;height:21px;line-height:19px"><span>Project Company</span></div>
<div class="a c bl" style="left:264px;top:287px;width:256px;height:21px;line-height:19px"><span>XYZ Company</span></div>
<div class="a c bl" style="left:521px;top:287px;width:103px;height:21px;line-height:19px"><span>Project Org.Unit</span></div>
<div class="a c bl" style="left:626px;top:287px;width:258px;height:21px;line-height:19px"><span></span></div>
<div class="a c bl" style="left:159px;top:312px;width:103px;height:21px;line-height:19px"><span>Project Created</span></div>
<div class="a c bl" style="left:264px;top:312px;width:256px;height:21px;line-height:19px"><span style="transform:scaleX(.81)">02/25/04 17:32</span></div>
<div class="a c bl" style="left:521px;top:312px;width:103px;height:21px;line-height:19px"><span>Project Modified</span></div>
<div class="a c bl" style="left:626px;top:312px;width:258px;height:21px;line-height:19px"><span style="transform:scaleX(.81)">04/27/22 15:16</span></div>
<div class="a c rd ctr" style="left:302px;top:349px;width:714px;height:21px;line-height:19px"><span style="transform:scaleX(.84)">Three main project parameters</span></div>
<div class="a dt" style="left:591px;top:378px;width:210px;text-align:center"><span>Without risks (Current Schedule)</span></div>
<div class="a dt" style="left:805px;top:378px;width:211px;text-align:center"><span>With risks and uncertainties</span></div>
<div class="a c rd ctr" style="left:302px;top:394px;width:72px;height:19px;line-height:17px"><span>1</span></div>
<div class="a c gy" style="left:375px;top:394px;width:213px;height:19px;line-height:17px"><span>Total Project Cost</span></div>
<div class="a c gy" style="left:590px;top:394px;width:212px;height:19px;line-height:17px"><span style="transform:scaleX(.81)">$74,272</span></div>
<div class="a c gy" style="left:804px;top:394px;width:212px;height:19px;line-height:17px"><span style="transform:scaleX(.81)">$96,224</span></div>
<div class="a c rd ctr" style="left:302px;top:414px;width:72px;height:18px;line-height:16px"><span>2</span></div>
<div class="a c gy" style="left:375px;top:414px;width:213px;height:18px;line-height:16px"><span>Project Finish Time</span></div>
<div class="a c gy" style="left:590px;top:414px;width:212px;height:18px;line-height:16px"><span style="transform:scaleX(.81)">02/17/14 17:00</span></div>
<div class="a c gy" style="left:804px;top:414px;width:212px;height:18px;line-height:16px"><span style="transform:scaleX(.81)">04/01/14 14:13</span></div>
<div class="a c rd ctr" style="left:302px;top:433px;width:72px;height:19px;line-height:17px"><span>3</span></div>
<div class="a c gy" style="left:375px;top:433px;width:213px;height:19px;line-height:17px"><span>Project Duration</span></div>
<div class="a c gy" style="left:590px;top:433px;width:212px;height:19px;line-height:17px"><span style="transform:scaleX(.81)">89 days</span></div>
<div class="a c gy" style="left:804px;top:433px;width:212px;height:19px;line-height:17px"><span style="transform:scaleX(.81)">119.65 days</span></div>
<div class="a c gn ctr" style="left:302px;top:462px;width:714px;height:20px;line-height:18px"><span style="transform:scaleX(.84)">Three most crucial tasks</span></div>
<div class="a dt" style="left:375px;top:491px;width:320px;text-align:center"><span>Affect on total project cost</span></div>
<div class="a dt" style="left:697px;top:491px;width:319px;text-align:center"><span>Affect on project duration</span></div>
<div class="a c gn ctr" style="left:302px;top:505px;width:72px;height:20px;line-height:18px"><span>1</span></div>
<div class="a c gy" style="left:375px;top:505px;width:320px;height:20px;line-height:18px"><span>Task: How can you reach your customers ?</span></div>
<div class="a c gy" style="left:697px;top:505px;width:319px;height:20px;line-height:18px"><span>Task: How can you reach your customers ?</span></div>
<div class="a c gn ctr" style="left:302px;top:526px;width:72px;height:19px;line-height:17px"><span>2</span></div>
<div class="a c gy" style="left:375px;top:526px;width:320px;height:19px;line-height:17px"><span>Task: How effective are your competitors ?</span></div>
<div class="a c gy" style="left:697px;top:526px;width:319px;height:19px;line-height:17px"><span>Task: How effective are your competitors ?</span></div>
<div class="a c gn ctr" style="left:302px;top:546px;width:72px;height:18px;line-height:16px"><span>3</span></div>
<div class="a c gy" style="left:375px;top:546px;width:320px;height:18px;line-height:16px"><span>Task: Will you be competing directly with competitors ?</span></div>
<div class="a c gy" style="left:697px;top:546px;width:319px;height:18px;line-height:16px"><span>Task: Will you be competing directly with competitors ?</span></div>
<div class="a c yl ctr" style="left:302px;top:575px;width:714px;height:19px;line-height:17px"><span style="transform:scaleX(.84)">Three most critical risks</span></div>
<div class="a dt" style="left:375px;top:603px;width:213px;text-align:center"><span>Affect on total project cost</span></div>
<div class="a dt" style="left:590px;top:603px;width:212px;text-align:center"><span>Affect on project duration</span></div>
<div class="a dt" style="left:804px;top:603px;width:212px;text-align:center"><span>Affect on all parameters</span></div>
<div class="a c yl ctr" style="left:302px;top:619px;width:72px;height:18px;line-height:16px"><span>1</span></div>
<div class="a c gy" style="left:375px;top:619px;width:213px;height:18px;line-height:16px"><span>Risk: Delay in Financing</span></div>
<div class="a c gy" style="left:590px;top:619px;width:212px;height:18px;line-height:16px"><span>Risk: Not enought information about competitors</span></div>
<div class="a c gy" style="left:804px;top:619px;width:212px;height:18px;line-height:16px"><span>Risk: Delay in Financing</span></div>
<div class="a c yl ctr" style="left:302px;top:638px;width:72px;height:19px;line-height:17px"><span>2</span></div>
<div class="a c gy" style="left:375px;top:638px;width:213px;height:19px;line-height:17px"><span>Risk: Not enought information about competitors</span></div>
<div class="a c gy" style="left:590px;top:638px;width:212px;height:19px;line-height:17px"><span>Risk: Delay in Financing</span></div>
<div class="a c gy" style="left:804px;top:638px;width:212px;height:19px;line-height:17px"><span>Risk: Not enought information about competitors</span></div>
<div class="a c yl ctr" style="left:302px;top:658px;width:72px;height:19px;line-height:17px"><span>3</span></div>
<div class="a c gy" style="left:375px;top:658px;width:213px;height:19px;line-height:17px"><span>Risk: Other risks, related to the project</span></div>
<div class="a c gy" style="left:590px;top:658px;width:212px;height:19px;line-height:17px"><span>Risk: Other risks, related to the project</span></div>
<div class="a c gy" style="left:804px;top:658px;width:212px;height:19px;line-height:17px"><span>Risk: Other risks, related to the project</span></div>
<div class="a dt" style="left:159px;top:354px;width:125px;text-align:center"><span>Number of Simulations</span></div>
<div class="a dt" style="left:1034px;top:354px;width:125px;text-align:center"><span>Percent Done</span></div>

<svg class="a" style="left:896px;top:212px" width="126" height="125" viewBox="0 0 126 125" font-family="Liberation Sans, sans-serif" font-weight="bold" fill="#fff" text-anchor="middle">
<defs>
<linearGradient id="gbg" x1="0" y1="0" x2="0" y2="1"><stop offset="0" stop-color="#000098"/><stop offset=".45" stop-color="#00008a"/><stop offset="1" stop-color="#00004e"/></linearGradient>
<linearGradient id="gvb" x1="0" y1="0" x2="0" y2="1"><stop offset="0" stop-color="#000094"/><stop offset="1" stop-color="#00004a"/></linearGradient>
<linearGradient id="ghub" x1="0" y1="0" x2="1" y2="1"><stop offset="0" stop-color="#b4b4c4"/><stop offset="1" stop-color="#8484a4"/></linearGradient>
<linearGradient id="gin" x1="0" y1="0" x2="0" y2="1"><stop offset="0" stop-color="#00007a"/><stop offset="1" stop-color="#00005a"/></linearGradient>
</defs>
<rect x=".5" y=".5" width="125" height="124" fill="url(#gbg)" stroke="#fff"/>
<circle cx="62.7" cy="62.5" r="52" fill="url(#gin)"/>
<circle cx="62.7" cy="62.5" r="58.2" fill="none" stroke="#fff" stroke-width="1.800"/>
<path d="M17.23 88.75A52.5 52.5 0 0 1 10.20 62.50L21.70 62.50A41 41 0 0 0 27.19 83.00Z" fill="#1c7c7c"/>
<path d="M10.20 62.50A52.5 52.5 0 0 1 17.23 36.25L27.19 42.00A41 41 0 0 0 21.70 62.50Z" fill="#3cb4b4"/>
<path d="M17.23 36.25A52.5 52.5 0 0 1 36.45 17.03L42.20 26.99A41 41 0 0 0 27.19 42.00Z" fill="#00dc00"/>
<path d="M36.45 17.03A52.5 52.5 0 0 1 62.70 10.00L62.70 21.50A41 41 0 0 0 42.20 26.99Z" fill="#00c800"/>
<path d="M62.70 10.00A52.5 52.5 0 0 1 88.95 17.03L83.20 26.99A41 41 0 0 0 62.70 21.50Z" fill="#ffff00"/>
<path d="M88.95 17.03A52.5 52.5 0 0 1 108.17 36.25L98.21 42.00A41 41 0 0 0 83.20 26.99Z" fill="#dcdc00"/>
<path d="M108.17 36.25A52.5 52.5 0 0 1 115.20 62.50L103.70 62.50A41 41 0 0 0 98.21 42.00Z" fill="#f01414"/>
<path d="M115.20 62.50A52.5 52.5 0 0 1 108.17 88.75L98.21 83.00A41 41 0 0 0 103.70 62.50Z" fill="#b40000"/>
<path d="M21.70 62.50L10.20 62.50" stroke="#10106a" stroke-width=".7" opacity=".7"/>
<path d="M27.19 42.00L17.23 36.25" stroke="#10106a" stroke-width=".7" opacity=".7"/>
<path d="M42.20 26.99L36.45 17.03" stroke="#10106a" stroke-width=".7" opacity=".7"/>
<path d="M62.70 21.50L62.70 10.00" stroke="#10106a" stroke-width=".7" opacity=".7"/>
<path d="M83.20 26.99L88.95 17.03" stroke="#10106a" stroke-width=".7" opacity=".7"/>
<path d="M98.21 42.00L108.17 36.25" stroke="#10106a" stroke-width=".7" opacity=".7"/>
<path d="M103.70 62.50L115.20 62.50" stroke="#10106a" stroke-width=".7" opacity=".7"/>
<path d="M18.10 88.25L12.47 91.50M11.61 83.66L9.11 84.70M9.28 76.81L6.68 77.51M7.87 69.72L5.20 70.07M10.20 62.50L4.70 62.50M7.87 55.28L5.20 54.93M9.28 48.19L6.68 47.49M11.61 41.34L9.11 40.30M17.23 36.25L12.47 33.50M18.83 28.84L16.69 27.19M23.60 23.40L21.69 21.49M29.04 18.63L27.39 16.49M36.45 17.03L33.70 12.27M41.54 11.41L40.50 8.91M48.39 9.08L47.69 6.48M55.48 7.67L55.13 5.00M62.70 10.00L62.70 4.50M69.92 7.67L70.27 5.00M77.01 9.08L77.71 6.48M83.86 11.41L84.90 8.91M88.95 17.03L91.70 12.27M96.36 18.63L98.01 16.49M101.80 23.40L103.71 21.49M106.57 28.84L108.71 27.19M108.17 36.25L112.93 33.50M113.79 41.34L116.29 40.30M116.12 48.19L118.72 47.49M117.53 55.28L120.20 54.93M115.20 62.50L120.70 62.50M117.53 69.72L120.20 70.07M116.12 76.81L118.72 77.51M113.79 83.66L116.29 84.70M107.30 88.25L112.93 91.50" stroke="#fff" stroke-width="1.600" fill="none"/>
<text transform="translate(34.6 82.0) scale(.9 1)" font-size="10.6">0.0</text>
<text transform="translate(35 50.4) scale(.9 1)" font-size="10.6">1.0</text>
<text transform="translate(62.7 34.2) scale(.9 1)" font-size="10.6">2.3</text>
<text transform="translate(89.5 50.4) scale(.9 1)" font-size="10.6">3.7</text>
<text transform="translate(89.5 82.0) scale(.9 1)" font-size="10.6">5.0</text>
<path d="M36.14 29.97L79.91 76.85L73.32 82.23Z" fill="#e4e4f0"/>
<circle cx="62.7" cy="62.5" r="15" fill="url(#ghub)"/>
<text x="62.7" y="97.8" font-size="11" font-weight="normal" stroke="#fff" stroke-width=".35" textLength="57.6" lengthAdjust="spacing">Cost Score</text>
<rect x="26.5" y="100.3" width="72.5" height="20" fill="url(#gvb)" stroke="#c2c2ca" stroke-width="1.900"/>
<text x="62.7" y="114.300" font-size="14.500">1.45</text>
</svg>
<svg class="a" style="left:1033px;top:212px" width="126" height="125" viewBox="0 0 126 125" font-family="Liberation Sans, sans-serif" font-weight="bold" fill="#fff" text-anchor="middle">
<rect x=".5" y=".5" width="125" height="124" fill="url(#gbg)" stroke="#fff"/>
<circle cx="62.7" cy="62.5" r="52" fill="url(#gin)"/>
<circle cx="62.7" cy="62.5" r="58.2" fill="none" stroke="#fff" stroke-width="1.800"/>
<path d="M17.23 88.75A52.5 52.5 0 0 1 10.20 62.50L21.70 62.50A41 41 0 0 0 27.19 83.00Z" fill="#1c7c7c"/>
<path d="M10.20 62.50A52.5 52.5 0 0 1 17.23 36.25L27.19 42.00A41 41 0 0 0 21.70 62.50Z" fill="#3cb4b4"/>
<path d="M17.23 36.25A52.5 52.5 0 0 1 36.45 17.03L42.20 26.99A41 41 0 0 0 27.19 42.00Z" fill="#00dc00"/>
<path d="M36.45 17.03A52.5 52.5 0 0 1 62.70 10.00L62.70 21.50A41 41 0 0 0 42.20 26.99Z" fill="#00c800"/>
<path d="M62.70 10.00A52.5 52.5 0 0 1 88.95 17.03L83.20 26.99A41 41 0 0 0 62.70 21.50Z" fill="#ffff00"/>
<path d="M88.95 17.03A52.5 52.5 0 0 1 108.17 36.25L98.21 42.00A41 41 0 0 0 83.20 26.99Z" fill="#dcdc00"/>
<path d="M108.17 36.25A52.5 52.5 0 0 1 115.20 62.50L103.70 62.50A41 41 0 0 0 98.21 42.00Z" fill="#f01414"/>
<path d="M115.20 62.50A52.5 52.5 0 0 1 108.17 88.75L98.21 83.00A41 41 0 0 0 103.70 62.50Z" fill="#b40000"/>
<path d="M21.70 62.50L10.20 62.50" stroke="#10106a" stroke-width=".7" opacity=".7"/>
<path d="M27.19 42.00L17.23 36.25" stroke="#10106a" stroke-width=".7" opacity=".7"/>
<path d="M42.20 26.99L36.45 17.03" stroke="#10106a" stroke-width=".7" opacity=".7"/>
<path d="M62.70 21.50L62.70 10.00" stroke="#10106a" stroke-width=".7" opacity=".7"/>
<path d="M83.20 26.99L88.95 17.03" stroke="#10106a" stroke-width=".7" opacity=".7"/>
<path d="M98.21 42.00L108.17 36.25" stroke="#10106a" stroke-width=".7" opacity=".7"/>
<path d="M103.70 62.50L115.20 62.50" stroke="#10106a" stroke-width=".7" opacity=".7"/>
<path d="M18.10 88.25L12.47 91.50M11.61 83.66L9.11 84.70M9.28 76.81L6.68 77.51M7.87 69.72L5.20 70.07M10.20 62.50L4.70 62.50M7.87 55.28L5.20 54.93M9.28 48.19L6.68 47.49M11.61 41.34L9.11 40.30M17.23 36.25L12.47 33.50M18.83 28.84L16.69 27.19M23.60 23.40L21.69 21.49M29.04 18.63L27.39 16.49M36.45 17.03L33.70 12.27M41.54 11.41L40.50 8.91M48.39 9.08L47.69 6.48M55.48 7.67L55.13 5.00M62.70 10.00L62.70 4.50M69.92 7.67L70.27 5.00M77.01 9.08L77.71 6.48M83.86 11.41L84.90 8.91M88.95 17.03L91.70 12.27M96.36 18.63L98.01 16.49M101.80 23.40L103.71 21.49M106.57 28.84L108.71 27.19M108.17 36.25L112.93 33.50M113.79 41.34L116.29 40.30M116.12 48.19L118.72 47.49M117.53 55.28L120.20 54.93M115.20 62.50L120.70 62.50M117.53 69.72L120.20 70.07M116.12 76.81L118.72 77.51M113.79 83.66L116.29 84.70M107.30 88.25L112.93 91.50" stroke="#fff" stroke-width="1.600" fill="none"/>
<text transform="translate(34.6 82.0) scale(.9 1)" font-size="10.6">0.0</text>
<text transform="translate(35 50.4) scale(.9 1)" font-size="10.6">1.0</text>
<text transform="translate(62.7 34.2) scale(.9 1)" font-size="10.6">2.3</text>
<text transform="translate(89.5 50.4) scale(.9 1)" font-size="10.6">3.7</text>
<text transform="translate(89.5 82.0) scale(.9 1)" font-size="10.6">5.0</text>
<path d="M38.01 28.52L79.07 77.80L72.19 82.80Z" fill="#e4e4f0"/>
<circle cx="62.7" cy="62.5" r="15" fill="url(#ghub)"/>
<text x="62.7" y="97.8" font-size="11" font-weight="normal" stroke="#fff" stroke-width=".35" textLength="78.4" lengthAdjust="spacing">Duration Score</text>
<rect x="26.5" y="100.3" width="72.5" height="20" fill="url(#gvb)" stroke="#c2c2ca" stroke-width="1.900"/>
<text x="62.7" y="114.300" font-size="14.500">1.52</text>
</svg>
<svg class="a" style="left:159px;top:374px" width="125" height="125" viewBox="0 0 125 125" font-family="Liberation Sans, sans-serif" font-weight="bold" fill="#fff" text-anchor="middle">
<rect x=".5" y=".5" width="124" height="124" fill="url(#gbg)" stroke="#fff"/>
<path d="M13.24 91.30A57 57 0 0 1 85.78 10.73L82.53 18.04A49 49 0 0 0 20.16 87.30Z" fill="#ff0000"/>
<path d="M85.78 10.73A57 57 0 0 1 111.96 91.30L105.04 87.30A49 49 0 0 0 82.53 18.04Z" fill="#c4c4c4"/>
<path d="M81.11 21.23L58.14 83.26L50.38 79.80Z" fill="#e4e4f0"/>
<circle cx="62.6" cy="62.8" r="11" fill="url(#ghub)"/>
<rect x="18" y="90.8" width="89" height="29" fill="url(#gvb)" stroke="#c2c2ca" stroke-width="1.900"/>
<text x="62.6" y="110" font-size="14">360</text>
</svg>
<svg class="a" style="left:1034px;top:374px" width="125" height="125" viewBox="0 0 125 125" font-family="Liberation Sans, sans-serif" font-weight="bold" fill="#fff" text-anchor="middle">
<rect x=".5" y=".5" width="124" height="124" fill="url(#gbg)" stroke="#fff"/>
<path d="M13.24 91.30A57 57 0 0 1 27.19 18.13L32.16 24.40A49 49 0 0 0 20.16 87.30Z" fill="#ff0000"/>
<path d="M27.19 18.13A57 57 0 0 1 111.96 91.30L105.04 87.30A49 49 0 0 0 32.16 24.40Z" fill="#c4c4c4"/>
<path d="M34.34 27.14L78.66 76.23L72.00 81.51Z" fill="#e4e4f0"/>
<circle cx="62.6" cy="62.8" r="11" fill="url(#ghub)"/>
<rect x="20.5" y="90.8" width="83" height="29" fill="url(#gvb)" stroke="#c2c2ca" stroke-width="1.900"/>
<text x="62.6" y="110" font-size="14">34%</text>
</svg>

</div>

<!-- RIGHT BAR -->
<div id="rbar" class="a">
<svg class="a rb" style="left:10px;top:6px" width="31" height="31" viewBox="1 1 30 30"><g transform="translate(16 16) scale(1.07) translate(-16 -16)"><rect x="5.700" y="8.600" width="20.800" height="13.700" fill="#fff" stroke="#111" stroke-width="1.500"/><g font-family="Liberation Sans, sans-serif" font-weight="bold" font-size="8.800" fill="#111"><text x="7.600" y="18.700">A</text><text x="14.800" y="18.700" textLength="9.800" lengthAdjust="spacingAndGlyphs">##</text></g></g></svg>
<svg class="a rb" style="left:10px;top:44px" width="31" height="31" viewBox="1 1 30 30"><g transform="translate(16 16) scale(1.07) translate(-16 -16)"><path d="M5.700 4.800v21.500h21.500" fill="none" stroke="#111" stroke-width="1.9"/><path d="M8.500 11.800h3.800v11.200h-3.800zM13.700 4.800h3.700v18.200h-3.700zM18.800 11.800h3.700v11.200h-3.700zM23.500 16.900h3.700v6.100h-3.700z" fill="#111"/></g></svg>
<svg class="a rb" style="left:10px;top:82px" width="31" height="31" viewBox="0 0 30 30"><path d="M4 3.300V26H28" fill="none" stroke="#111" stroke-width="2"/><path d="M7.300 22.300c9.500 0 15-5 18-17" fill="none" stroke="#111" stroke-width="2.100"/><path d="M22.300 7.800l3.400-4.800 1.600 5.600" fill="none" stroke="#111" stroke-width="1.600"/></svg>
<svg class="a rb" style="left:10px;top:120px" width="31" height="31" viewBox="0 0 30 30"><path d="M8 23.500c9 0 14.500-6 17.500-18.500v18.500z" fill="#bcbcbc"/><path d="M4 3.300V26H28" fill="none" stroke="#111" stroke-width="2"/><path d="M7.300 22.300c9.500 0 15-5 18-17.500" fill="none" stroke="#111" stroke-width="2.100"/></svg>
<svg class="a rb" style="left:10px;top:158px" width="31" height="31" viewBox="0 0 30 30"><path d="M3 23A12.300 12.600 0 1 1 27 23" fill="none" stroke="#111" stroke-width="2.300"/><path d="M13.800 20.600l10.800-9.800-8.800 11.600z" fill="#111" stroke="#111" stroke-width=".8"/><path d="M6.500 13.200l1.500 1.400M10.500 10l.9 1.900M15 8.800v2M19.500 10l-.8 1.800M24.500 15.500l.5 2" stroke="#111" stroke-width="1.200"/></svg>
<svg class="a rb" style="left:10px;top:196px" width="31" height="31" viewBox="1 1 30 30"><g transform="translate(16 16) scale(1.07) translate(-16 -16)"><rect x="5.0" y="4.0" width="4.3" height="4.3" fill="#bbb" stroke="#666" stroke-width=".7"/><rect x="10.8" y="4.0" width="4.3" height="4.3" fill="#bbb" stroke="#666" stroke-width=".7"/><rect x="16.6" y="4.0" width="4.3" height="4.3" fill="#111" stroke="#666" stroke-width=".7"/><rect x="22.4" y="4.0" width="4.3" height="4.3" fill="#111" stroke="#666" stroke-width=".7"/><rect x="5.0" y="9.8" width="4.3" height="4.3" fill="#fff" stroke="#666" stroke-width=".7"/><rect x="10.8" y="9.8" width="4.3" height="4.3" fill="#fff" stroke="#666" stroke-width=".7"/><rect x="16.6" y="9.8" width="4.3" height="4.3" fill="#ccc" stroke="#666" stroke-width=".7"/><rect x="22.4" y="9.8" width="4.3" height="4.3" fill="#111" stroke="#666" stroke-width=".7"/><rect x="5.0" y="15.6" width="4.3" height="4.3" fill="#fff" stroke="#666" stroke-width=".7"/><rect x="10.8" y="15.6" width="4.3" height="4.3" fill="#fff" stroke="#666" stroke-width=".7"/><rect x="16.6" y="15.6" width="4.3" height="4.3" fill="#ddd" stroke="#666" stroke-width=".7"/><rect x="22.4" y="15.6" width="4.3" height="4.3" fill="#ccc" stroke="#666" stroke-width=".7"/><rect x="5.0" y="21.4" width="4.3" height="4.3" fill="#fff" stroke="#666" stroke-width=".7"/><rect x="10.8" y="21.4" width="4.3" height="4.3" fill="#fff" stroke="#666" stroke-width=".7"/><rect x="16.6" y="21.4" width="4.3" height="4.3" fill="#fff" stroke="#666" stroke-width=".7"/><rect x="22.4" y="21.4" width="4.3" height="4.3" fill="#bbb" stroke="#666" stroke-width=".7"/></g></svg>
<svg class="a rb" style="left:10px;top:234px" width="31" height="31" viewBox="1 1 30 30"><g transform="translate(16 16) scale(1.07) translate(-16 -16)"><path d="M15 15.500V5.500A10.500 10.500 0 1 0 24.500 20z" fill="#111"/><path d="M17 13.500V3.500A10.500 10.500 0 0 1 27 12.500z" fill="#111"/><path d="M17.500 15l10-1a10.500 10.500 0 0 1-1.500 5.200z" fill="#111"/></g></svg>
<svg class="a rb" style="left:10px;top:272px" width="31" height="31" viewBox="1 1 30 30"><g transform="translate(16 16) scale(1.07) translate(-16 -16)"><path d="M4.500 3v23.500h22" fill="none" stroke="#111" stroke-width="1.9"/><g fill="#111"><circle cx="9" cy="22" r="1.300"/><circle cx="12" cy="18" r="1.300"/><circle cx="14" cy="21" r="1.300"/><circle cx="16" cy="14.500" r="1.300"/><circle cx="19" cy="16" r="1.300"/><circle cx="20" cy="11" r="1.300"/><circle cx="23" cy="13" r="1.300"/><circle cx="24.500" cy="8" r="1.300"/></g></g></svg>
<svg class="a rb" style="left:10px;top:310px" width="31" height="31" viewBox="1 1 30 30"><g transform="translate(16 16) scale(1.07) translate(-16 -16)"><path d="M5.500 25.500L26 4.500" stroke="#111" stroke-width="2.1"/></g></svg>
<svg class="a rb" style="left:10px;top:348px" width="31" height="31" viewBox="1 1 30 30"><g transform="translate(16 16) scale(1.07) translate(-16 -16)"><rect x="4.500" y="6" width="22.500" height="18" fill="#fff" stroke="#111" stroke-width="2.1"/><path d="M6.500 22l7-10.500 4.500 6 2-2.500 4.500 7z" fill="#111"/><path d="M22.500 11l2.500 5.500-1 .5-2.500-3z" fill="#111"/><circle cx="9" cy="9.800" r=".9" fill="#111"/></g></svg>
<svg class="a rb" style="left:10px;top:386px" width="31" height="31" viewBox="1 1 30 30"><g transform="translate(16 16) scale(1.07) translate(-16 -16)"><rect x="4.500" y="5.500" width="23" height="19" fill="#fff" stroke="#111" stroke-width="2.1"/></g></svg>

</div>

<div class="a" style="left:142px;top:146px;width:3px;height:606px;background:#f1f1f1"></div>
<div id="lframe" class="a"></div>
<div id="topline" class="a"></div>
<div class="a" style="left:3px;top:145px;width:137px;height:1px;background:#5a5a5a"></div>

<!-- BOTTOM TAB -->
<div id="btab" class="a">
<div class="a" style="left:35px;top:0;width:113px;height:28px;background:linear-gradient(#020226,#00008e);border-right:2px solid #b4b4b4;border-bottom:2px solid #b4b4b4"></div>
<svg class="a" style="left:5px;top:6px" width="21" height="21" viewBox="0 0 21 21"><circle cx="10.400" cy="10.400" r="9.300" fill="#dedede" stroke="#4c4c4c" stroke-width="1"/><path d="M6 10.400h8.800M10.400 6v8.800" stroke="#8a8a8a" stroke-width="1.400"/></svg>
<div class="a" style="left:0;top:0;width:35px;height:1px;background:#a8a8a8"></div><div class="a" style="left:148px;top:0;width:875px;height:1px;background:#a8a8a8"></div>
<div class="a" style="left:73.41px;top:8.19px;font-size:11px;line-height:12px;letter-spacing:-0.077px;color:#fff;white-space:nowrap">Default</div>
<div class="a" style="left:160.05px;top:10.19px;font-size:11px;line-height:12px;letter-spacing:-0.002px;color:#111;white-space:nowrap">Click [+] to create new risk dashboard</div>
</div>

<!-- STATUS -->
<div id="status" class="a">
  <div class="a" style="left:4.65px;top:5.96px;font-size:10.5px;line-height:12px;letter-spacing:0.292px;color:#111;white-space:nowrap">Ready</div>
<div class="a" style="left:800.95px;top:5.96px;font-size:10.5px;line-height:12px;letter-spacing:0.547px;color:#111;white-space:nowrap">Project Dashboard</div>
<div class="a" style="left:961.88px;top:5.96px;font-size:10.5px;line-height:12px;letter-spacing:-0.470px;color:#111;white-space:nowrap">CAP</div>
<div class="a" style="left:987.75px;top:5.96px;font-size:10.5px;line-height:12px;letter-spacing:1.609px;color:#111;white-space:nowrap">NUM</div>
<div class="a" style="left:1020.04px;top:5.96px;font-size:10.5px;line-height:12px;letter-spacing:-0.978px;color:#111;white-space:nowrap">SCRL</div>
<div class="a" style="left:1051.10px;top:5.96px;font-size:10.5px;line-height:12px;letter-spacing:0.356px;color:#111;white-space:nowrap">Thu, Apr 28,2022</div>
<div class="a" style="left:1143.01px;top:5.96px;font-size:10.5px;line-height:12px;letter-spacing:0.171px;color:#111;white-space:nowrap">11:23:48 PM</div>
<svg class="a" style="left:1211px;top:9px" width="11" height="11" viewBox="0 0 11 11"><g fill="#a0a0a0"><rect x="8" y="8" width="2" height="2"/><rect x="8" y="4.500" width="2" height="2"/><rect x="4.500" y="8" width="2" height="2"/><rect x="8" y="1" width="2" height="2"/><rect x="4.500" y="4.500" width="2" height="2"/><rect x="1" y="8" width="2" height="2"/></g></svg>
</div>

</div>
</body></html>
